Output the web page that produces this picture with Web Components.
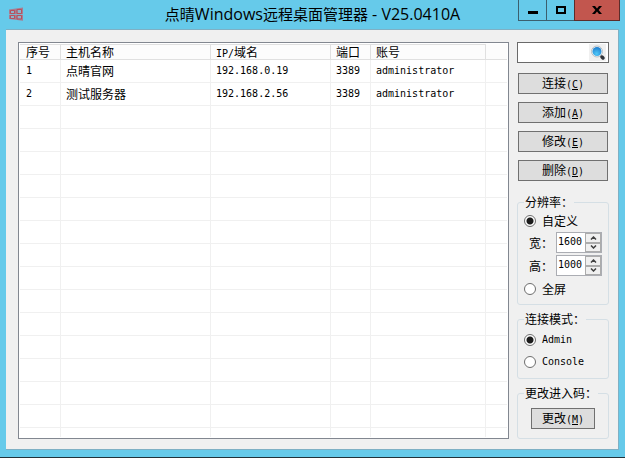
<!DOCTYPE html>
<html lang="zh-CN">
<head>
<meta charset="utf-8">
<title>点晴Windows远程桌面管理器</title>
<style>
    html,
    body {
        height: 100%;
        margin: 0;
    }
    body {
        font: 12px/16px "Noto Sans CJK SC", sans-serif;
        color: #000;
        --sky: #66caea;
        --face: #f0f0f0;
        --mono: 10px/14px "DejaVu Sans Mono", "Noto Sans CJK SC", monospace;
    }
    aside {
        display: flex;
        flex-direction: column;
    }
    search-box {
        margin-bottom: 10px;
    }
    nav {
        display: grid;
        gap: 8px;
        padding: 0 1px;
        margin-bottom: 14px;
    }
    .groups {
        display: grid;
        gap: 7px;
    }
    .code {
        --pad: 8px 13px 9px;
    }
</style>
</head>
<body>
<app-window caption="点晴Windows远程桌面管理器 - V25.0410A">
    <host-list></host-list>
    <aside>
        <search-box></search-box>
        <nav>
            <key-button key="C">连接</key-button>
            <key-button key="A">添加</key-button>
            <key-button key="E">修改</key-button>
            <key-button key="D">删除</key-button>
        </nav>
        <div class="groups">
            <resolution-options></resolution-options>
            <mode-options></mode-options>
            <group-box class="code" caption="更改进入码：">
                <key-button key="M">更改</key-button>
            </group-box>
        </div>
    </aside>
</app-window>

<script>
class BaseElement extends HTMLElement {
    constructor() {
        super();
        this.attachShadow({ mode: 'open' });
    }
    connectedCallback() {
        this.shadowRoot.innerHTML = this.render();
    }
}

const radioStyle = `
    label {
        display: flex;
        align-items: center;
        gap: 6px;
        height: 22px;
    }
    input[type="radio"] {
        appearance: none;
        box-sizing: border-box;
        flex: none;
        width: 12px;
        height: 12px;
        margin: 0;
        border: 1px solid #6e6e6e;
        border-radius: 50%;
        background: #fff;
    }
    input[type="radio"]:checked {
        background: radial-gradient(circle, #1c1c1c 3px, #fff 4px);
    }
`;

customElements.define('app-window', class AppWindow extends BaseElement {
    render() {
        // latin runs are set one size larger than the hanzi
        const caption = this.getAttribute('caption').replace(/[ -~]+/g, '<span>$&</span>');
        return `
            <style>
                :host {
                    display: grid;
                    grid-template-rows: 29px minmax(0, 1fr);
                    box-sizing: border-box;
                    height: 100vh;
                    padding: 0 6px 7px;
                    border-bottom: 1px solid #22323a;
                    background: var(--sky);
                }
                header {
                    display: grid;
                    grid-template-columns: 101px 1fr 101px;
                }
                .logo {
                    margin: 7px 0 0 3px;
                }
                h1 {
                    margin: 0;
                    text-align: center;
                    white-space: nowrap;
                    font: 15px/29px "Open Sans", "Noto Sans CJK SC", sans-serif;
                }
                h1 span {
                    font-size: 16px;
                }
                .controls {
                    display: flex;
                    justify-self: end;
                    height: 21px;
                    margin-right: -1px;
                }
                .controls button {
                    display: grid;
                    place-items: center;
                    box-sizing: border-box;
                    width: 28px;
                    padding: 0;
                    border: 1px solid #3b5f6e;
                    border-width: 0 0 1px 1px;
                    background: none;
                }
                .controls .close {
                    width: 46px;
                    border-color: #5c2c2a;
                    border-right-width: 1px;
                    background: #c2564e;
                }
                main {
                    display: grid;
                    grid-template-columns: minmax(0, 1fr) 92px;
                    grid-template-rows: minmax(0, 1fr);
                    gap: 8px;
                    padding: 12px 9px 10px 12px;
                    border: 1px solid #7fb0c4;
                    border-left: 0;
                    background: var(--face);
                }
            </style>
            <header>
                <svg class="logo" width="15" height="14" viewBox="0 0 15 14">
                    <path fill="#a87c90" d="M0 2.500 14 .5V13.800L0 12Z"/>
                    <path fill="#8ab4cc" d="M2 4H5V6H2ZM8.500 3H12.500V6H8.500ZM2 9H5V11H2ZM8.500 9H12.500V11.500H8.500Z"/>
                    <path fill="none" stroke="#b8505e" d="M1.500 3.500H5.500V6.500H1.500ZM8 2.500H12.500V6.500H8ZM1.500 8.500H5.500V11.500H1.500ZM8 8.500H12.500V12H8Z"/>
                    <path stroke="#7fb4cc" d="M0 7.500H14"/>
                </svg>
                <h1>${caption}</h1>
                <div class="controls">
                    <button aria-label="最小化"><svg width="10" height="10"><path d="M0 6h10v3H0z"/></svg></button>
                    <button aria-label="最大化"><svg width="10" height="8"><path fill="none" stroke="#000" stroke-width="2" d="M1 1h8v6H1z"/></svg></button>
                    <button class="close" aria-label="关闭"><svg width="10" height="8"><path d="M0 0h3l2 2.500L7 0h3L6.600 4 10 8H7L5 5.500 3 8H0l3.400-4z"/></svg></button>
                </div>
            </header>
            <main><slot></slot></main>
        `;
    }
});

customElements.define('host-list', class HostList extends BaseElement {
    #hosts = [
        ['1', '点晴官网', '192.168.0.19', '3389', 'administrator'],
        ['2', '测试服务器', '192.168.2.56', '3389', 'administrator'],
    ]
    #row(cells) {
        const [id, name, ...rest] = cells;
        return `<tr><td class="mono">${id}</td><td>${name}</td>${rest.map(c => `<td class="mono">${c}</td>`).join('')}<td></td></tr>`;
    }
    render() {
        const blank = this.#row(['', '', '', '', '']).repeat(60);
        return `
            <style>
                :host {
                    display: block;
                    box-sizing: border-box;
                    padding: 1px;
                    border: 1px solid #828790;
                    background: #fff;
                }
                .view {
                    height: 100%;
                    overflow: hidden;
                }
                table {
                    width: 100%;
                    table-layout: fixed;
                    border-collapse: separate;
                    border-spacing: 0;
                }
                th,
                td {
                    box-sizing: border-box;
                    padding: 0 0 0 5px;
                    border: 0 solid #f0f0f0;
                    text-align: left;
                    white-space: nowrap;
                    font-weight: normal;
                }
                th {
                    height: 16px;
                    line-height: 14px;
                    border-color: #e0e0e0;
                    border-width: 1px 1px 1px 0;
                    background: #fcfcfc;
                }
                td {
                    height: 23px;
                    border-width: 0 1px 1px 0;
                }
                th:last-child,
                td:last-child {
                    border-right: 0;
                }
                th:last-child {
                    border-top-color: #fcfcfc;
                }
                .mono {
                    font: var(--mono);
                }
                th .mono {
                    line-height: 1;
                }
                th:first-child,
                td:first-child {
                    padding-left: 6px;
                }
            </style>
            <div class="view">
                <table>
                    <colgroup>
                        <col style="width: 41px"><col style="width: 150px"><col style="width: 120px">
                        <col style="width: 40px"><col style="width: 115px"><col>
                    </colgroup>
                    <thead>
                        <tr><th>序号</th><th>主机名称</th><th><span class="mono">IP/</span>域名</th><th>端口</th><th>账号</th><th></th></tr>
                    </thead>
                    <tbody>${this.#hosts.map(h => this.#row(h)).join('')}${blank}</tbody>
                </table>
            </div>
        `;
    }
});

customElements.define('search-box', class SearchBox extends BaseElement {
    render() {
        return `
            <style>
                :host {
                    display: flex;
                    box-sizing: border-box;
                    height: 21px;
                    padding: 1px 2px;
                    border: 1px solid #6a6a6a;
                    background: #fff;
                }
                input {
                    flex: 1;
                    min-width: 0;
                    padding: 0 2px;
                    border: 0;
                    outline: 0;
                    font: inherit;
                    background: none;
                }
                button {
                    width: 17px;
                    height: 17px;
                    padding: 0;
                    border: 0;
                    background: #f0f0f0;
                }
                svg {
                    display: block;
                }
            </style>
            <input type="text" aria-label="搜索">
            <button aria-label="查找">
                <svg width="17" height="17" viewBox="0 0 17 17">
                    <defs>
                        <radialGradient id="lens" cx=".45" cy=".75" r=".8">
                            <stop offset="0" stop-color="#4fc8f8"/>
                            <stop offset="1" stop-color="#1a78cc"/>
                        </radialGradient>
                    </defs>
                    <path stroke="#9aa0a4" stroke-width="2" d="M11 11l2 2"/>
                    <circle cx="8" cy="7.500" r="5.500" fill="#f4f8fa" stroke="#b9c0c4"/>
                    <circle cx="8" cy="7.500" r="4.500" fill="url(#lens)"/>
                    <path stroke="#30343a" stroke-width="3.500" stroke-linecap="round" d="M13 13l1 1"/>
                </svg>
            </button>
        `;
    }
});

customElements.define('key-button', class KeyButton extends BaseElement {
    render() {
        const key = this.getAttribute('key');
        return `
            <style>
                :host {
                    display: block;
                }
                button {
                    display: block;
                    box-sizing: border-box;
                    width: 100%;
                    height: 21px;
                    padding: 0;
                    border: 1px solid #707070;
                    background: #ddd;
                    color: inherit;
                    font: inherit;
                }
                button:hover {
                    background: #e5f1fb;
                }
                span {
                    font: var(--mono);
                }
            </style>
            <button><slot></slot><span>(<u>${key}</u>)</span></button>
        `;
    }
});

customElements.define('group-box', class GroupBox extends BaseElement {
    render() {
        return `
            <style>
                :host {
                    display: block;
                }
                fieldset {
                    min-width: 0;
                    margin: 0;
                    padding: 0;
                    border: 1px solid #d5dfe5;
                    border-radius: 3px;
                }
                legend {
                    height: 14px;
                    margin-left: 6px;
                    padding: 0 1px;
                    line-height: 14px;
                    white-space: nowrap;
                }
                .content {
                    padding: var(--pad, 1px 6px 4px);
                }
            </style>
            <fieldset>
                <legend>${this.getAttribute('caption')}</legend>
                <div class="content"><slot></slot></div>
            </fieldset>
        `;
    }
});

customElements.define('spin-field', class SpinField extends BaseElement {
    connectedCallback() {
        super.connectedCallback();
        const input = this.shadowRoot.querySelector('input');
        const step = (n) => () => { input.value = Number(input.value) + n; };
        this.shadowRoot.querySelector('.up').onclick = step(1);
        this.shadowRoot.querySelector('.down').onclick = step(-1);
    }
    render() {
        return `
            <style>
                :host {
                    display: flex;
                    align-items: center;
                    gap: 3px;
                    padding-left: 5px;
                }
                label {
                    flex: none;
                    width: 24px;
                }
                .box {
                    display: grid;
                    grid-template: 1fr 1fr / minmax(0, 1fr) 16px;
                    box-sizing: border-box;
                    flex: 1;
                    min-width: 0;
                    height: 21px;
                    border: 1px solid #abadb3;
                    background: #fff;
                }
                input {
                    grid-row: span 2;
                    box-sizing: border-box;
                    width: 100%;
                    height: 16px;
                    padding: 0 0 0 1px;
                    border: 0;
                    outline: 0;
                    font: var(--mono);
                    background: none;
                }
                button {
                    display: grid;
                    place-items: center;
                    padding: 0;
                    border: 1px solid #acacac;
                    background: #f0f0f0;
                }
                svg {
                    fill: none;
                    stroke: #404040;
                    stroke-width: 1.5;
                }
            </style>
            <label for="value">${this.getAttribute('label')}</label>
            <div class="box">
                <input id="value" type="text" inputmode="numeric" value="${this.getAttribute('value')}">
                <button class="up" aria-label="增加"><svg width="7" height="4"><path d="M1 3.500l2.500-2.500L6 3.500"/></svg></button>
                <button class="down" aria-label="减少"><svg width="7" height="4"><path d="M1 .5l2.500 2.500L6 .5"/></svg></button>
            </div>
        `;
    }
});

customElements.define('resolution-options', class ResolutionOptions extends BaseElement {
    render() {
        return `
            <style>
                :host {
                    display: block;
                }
                spin-field {
                    margin-bottom: 2px;
                }
                ${radioStyle}
            </style>
            <group-box caption="分辨率：">
                <label><input type="radio" name="size" checked>自定义</label>
                <spin-field label="宽：" value="1600"></spin-field>
                <spin-field label="高：" value="1000"></spin-field>
                <label><input type="radio" name="size">全屏</label>
            </group-box>
        `;
    }
});

customElements.define('mode-options', class ModeOptions extends BaseElement {
    render() {
        return `
            <style>
                :host {
                    display: block;
                    --pad: 3px 6px 5px;
                }
                span {
                    font: var(--mono);
                }
                ${radioStyle}
            </style>
            <group-box caption="连接模式：">
                <label><input type="radio" name="mode" checked><span>Admin</span></label>
                <label><input type="radio" name="mode"><span>Console</span></label>
            </group-box>
        `;
    }
});
</script>
</body>
</html>
